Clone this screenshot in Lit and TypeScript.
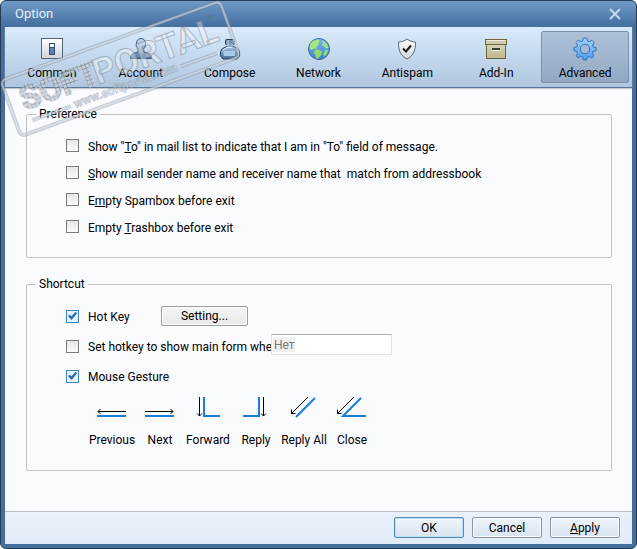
import { LitElement, html, css, svg, nothing } from "lit";
import { customElement, state } from "lit/decorators.js";
import { classMap } from "lit/directives/class-map.js";

const icons = {
  common: svg`
    <rect x="1.5" y="1.5" width="21" height="20" fill="url(#plate)" stroke="#51647c"/>
    <rect x="9.5" y="6.5" width="5" height="11" fill="#5b82b0" stroke="#37506e"/>
    <rect x="10" y="7" width="4" height="4" fill="#f4f9ff"/>
    <rect x="9" y="10" width="6" height="1" fill="#37506e"/>`,
  account: svg`
    <path d="M1.500 21.500C1.500 17.500 4 16 8 15.500L10 12.500C7.500 10.500 7 8 7.500 5.500C8 3 9.700 1.500 12 1.500C14.300 1.500 16 3 16.500 5.500C17 8 16.500 10.500 14 12.500L16 15.500C20 16 22.500 17.500 22.500 21.500Z" fill="url(#blue)" stroke="#3d5878"/>`,
  compose: svg`
    <path d="M2.500 14.500Q3 11.500 8.500 9.500H15.500Q21 11.500 21.500 14.500V19L19 22H5L2.500 19Z" fill="url(#ink)" stroke="#2c3f58"/>
    <rect x="7.500" y="2.500" width="9" height="5" rx="1" fill="#7693b5" stroke="#2c3f58"/>
    <rect x="9" y="7" width="6" height="3" fill="#8ea9c7"/>
    <path d="M10 3V9" stroke="#b9cde4"/>
    <path d="M5 14H17V19H6Z" fill="#a9c9e8"/>
    <path d="M5 13L9 10.500H14" fill="none" stroke="#d9e9f8"/>`,
  network: svg`
    <circle cx="12" cy="12" r="10.500" fill="url(#sea)" stroke="#3f6797"/>
    <path d="M3 8C4 5 7 2.500 11 2.500L13 4L11 7L12 8L9 10L10 12L7 11.500L5 13L2.500 12Z" fill="#a5e67e"/>
    <path d="M15 3.500C18 4.500 21 7.500 21.500 11L19 11.500L17 9L15 8L16 6Z" fill="#a5e67e"/>
    <path d="M8 13L12 12.500L15 15L14 18L11 21.500H9L8.500 18L6.500 15.500Z" fill="#8fdc69"/>
    <path d="M18 13L21 13C20.500 16 19.500 18 17.500 19.500L16.500 17Z" fill="#8fdc69"/>`,
  antispam: svg`
    <path d="M12 2C9.500 4 6.500 5 3.500 5C3.500 13 5 18.500 12 22C19 18.500 20.500 13 20.500 5C17.500 5 14.500 4 12 2Z" fill="url(#plate)" stroke="#5c6a7a"/>
    <path d="M8 11.500L11 14.500L16 8.500" fill="none" stroke="#1b1b1b" stroke-width="2"/>`,
  addin: svg`
    <rect x="2.500" y="7.500" width="19" height="14" fill="url(#box)" stroke="#6e6538"/>
    <rect x="1.500" y="2.500" width="21" height="5" fill="#cdc8ad" stroke="#6e6538"/>
    <rect x="2" y="3" width="20" height="1" fill="#efecdc"/>
    <rect x="8" y="11" width="8" height="2" fill="#33432c"/>
    <rect x="8" y="13" width="8" height="1" fill="#f3f0e2"/>`,
  advanced: svg`
    <path fill-rule="evenodd" d="M10.300 1H13.700L14.400 4L16.300 4.800L18.900 3.200L21.200 5.500L19.500 8L20.200 10L23 10.500V13.700L20.200 14.300L19.400 16.200L21 18.800L18.700 21L16.200 19.400L14.300 20.200L13.700 23H10.300L9.700 20.200L7.800 19.400L5.300 21L3 18.800L4.600 16.200L3.800 14.300L1 13.700V10.500L3.800 9.800L4.600 7.900L3 5.500L5.300 3.200L7.800 4.800L9.700 4ZM12 7.200A4.800 4.800 0 1 0 12 16.800A4.800 4.800 0 1 0 12 7.200Z" fill="url(#gear)" stroke="#2f6fb8"/>`,
};

const gestures = [
  { name: "Previous", art: svg`<path class="ink" d="M1 14.500H29M3.500 12L1 14.500L3.500 17"/><path class="track" d="M0 19H29"/>` },
  { name: "Next", art: svg`<path class="ink" d="M0 14.500H28M25.500 12L28 14.500L25.500 17"/><path class="track" d="M0 19H29"/>` },
  { name: "Forward", art: svg`<path class="ink" d="M6.500 0V19M4 16.500L6.500 19L9 16.500"/><path class="track" d="M11 0V19H27"/>` },
  { name: "Reply", art: svg`<path class="ink" d="M22.500 0V19M20 16.500L22.500 19L25 16.500"/><path class="track" d="M2 19H18V0"/>` },
  { name: "Reply All", art: svg`<path class="ink" d="M19 0L2.500 16.500M2.500 12.500V16.500H6.500"/><path class="track" d="M26 1L7 20"/>` },
  { name: "Close", art: svg`<path class="ink" d="M17 0L0.500 16.500M0.500 12.500V16.500H4.500"/><path class="track" d="M24 1L6 19H29"/>` },
];

const tabs: { id: keyof typeof icons; label: string }[] = [
  { id: "common", label: "Common" },
  { id: "account", label: "Account" },
  { id: "compose", label: "Compose" },
  { id: "network", label: "Network" },
  { id: "antispam", label: "Antispam" },
  { id: "addin", label: "Add-In" },
  { id: "advanced", label: "Advanced" },
];

@customElement("app-root")
export class AppRoot extends LitElement {
  @state() private active = "advanced";

  static styles = css`
    :host {
      display: block;
      position: relative;
      font: 12px/16px Roboto, "Open Sans", sans-serif;
      color: #000;
    }
    * { box-sizing: border-box; }
    button, input { font: inherit; color: inherit; }
    .window {
      display: flex;
      flex-direction: column;
      min-height: 100vh;
      padding: 0 4px 4px;
      border: 1px solid #263c56;
      border-radius: 6px;
      background: linear-gradient(#7099c6, #436e9e 26px);
    }
    .title {
      display: flex;
      align-items: center;
      justify-content: space-between;
      height: 26px;
      padding: 0 10px;
      color: #e6f0fa;
    }
    .title h1 { margin: 0; font: inherit; font-size: 13px; }
    .close { display: flex; padding: 0; border: 0; background: none; }
    .close svg { width: 14px; height: 14px; stroke: #c8d9ea; stroke-width: 2; }
    .tabs {
      display: flex;
      gap: 1px;
      padding: 4px 3px;
      border-bottom: 1px solid #56779a;
      background: linear-gradient(#d9ebfb, #afc6df);
      box-shadow: 0 1px 1px #c5c9d0;
      z-index: 1;
    }
    .tab {
      flex: 1 1 0;
      display: flex;
      flex-direction: column;
      align-items: center;
      height: 52px;
      gap: 4px;
      padding: 5px 0 0;
      border: 1px solid transparent;
      border-radius: 2px;
      background: none;
    }
    .tab.on {
      border-color: #7b91aa;
      background: linear-gradient(#adc2d9, #93a9c3);
    }
    .tab svg { width: 24px; height: 24px; flex: none; }
    .defs { position: absolute; width: 0; height: 0; }
    main {
      flex: 1;
      display: flex;
      flex-direction: column;
      gap: 18px;
      padding: 18px 20px 40px 21px;
      background: #f9fbff;
    }
    fieldset {
      min-width: 0;
      margin: 0;
      padding: 10px 16px 17px 39px;
      border: 1px solid #c3c3c3;
      border-radius: 2px;
    }
    fieldset.shortcut { padding-top: 9px; padding-bottom: 22px; }
    legend { margin-left: -30px; padding: 0 3px; }
    .row { display: flex; align-items: center; height: 27px; white-space: pre; }
    .shortcut .row { height: 30px; }
    .check { display: flex; gap: 9px; align-items: center; }
    .check span { padding-top: 2px; }
    input[type="checkbox"] {
      appearance: none;
      flex: none;
      display: grid;
      place-items: center;
      width: 13px;
      height: 13px;
      margin: 0;
      border: 1px solid #7b7b7b;
      background: linear-gradient(#e6e6e6, #fcfcfc);
    }
    input[type="checkbox"]:checked { border-color: #3f87bf; background: #e3f3fd; }
    input[type="checkbox"]:checked::before {
      content: "";
      width: 9px;
      height: 9px;
      background: #2a66a8;
      clip-path: polygon(0 50%, 20% 36%, 38% 56%, 84% 4%, 100% 20%, 40% 94%);
    }
    .push {
      padding: 0 4px;
      height: 21px;
      border: 1px solid #8b949e;
      border-radius: 2px;
      box-shadow: inset 0 0 0 1px #f7fbff;
      background: linear-gradient(#eff5fb, #d8e4f1);
    }
    .push.setting {
      width: 87px;
      height: 20px;
      border-color: #9c9c9c;
      box-shadow: inset 0 0 0 1px #fcfcfc;
      background: linear-gradient(#f5f5f5, #e9e9e9);
    }
    .push.ok { border-color: #5d88b4; box-shadow: inset 0 0 0 1px #b5e0fb; }
    .hot { width: 95px; }
    .hotkey { width: 205px; }
    .key {
      width: 121px;
      height: 21px;
      padding: 0 2px;
      margin-bottom: 3px;
      border: 1px solid #dfe2e8;
      border-top-color: #a9abb2;
      background: #fff linear-gradient(#efefef, #efefef) 1px 2px / 22px 15px no-repeat;
      color: #7a7a7a;
    }
    .gestures {
      display: grid;
      grid-template-columns: repeat(6, 48px);
      margin: 6px 0 0 22px;
      padding: 0;
      list-style: none;
    }
    .gestures li {
      display: flex;
      flex-direction: column;
      align-items: center;
      gap: 13px;
      white-space: nowrap;
    }
    .gestures svg { width: 31px; height: 22px; fill: none; }
    .ink { stroke: #000; }
    .track { stroke: #1a7cdc; stroke-width: 2; }
    footer {
      display: flex;
      justify-content: flex-end;
      gap: 8px;
      padding: 5px 12px 6px;
      border-top: 1px solid #b9c0cb;
      background: linear-gradient(#e9f1fa, #dfecf8);
    }
    footer .push { width: 70px; }
    .stamp {
      position: absolute;
      top: 0;
      left: 0;
      z-index: 2;
      width: 246px;
      height: 140px;
      pointer-events: none;
      fill: none;
    }
    .stamp text { font-family: Roboto, sans-serif; font-weight: 700; }
    .word { font-size: 35px; fill: #fff; fill-opacity: 0.35; stroke: #73808f; stroke-opacity: 0.5; stroke-width: 1; }
    .dots { font-size: 33px; fill: url(#weave); fill-opacity: 1; stroke: url(#weave); stroke-opacity: 1; stroke-width: 2; }
    .small { font-size: 12px; fill: #fff; fill-opacity: 0.4; stroke: #73808f; stroke-opacity: 0.4; stroke-width: 1; }
    .stamp .mark { font-size: 10px; fill: #5f6f82; fill-opacity: 0.7; stroke: none; }
    .edge { stroke: #7d8894; stroke-opacity: 0.4; stroke-width: 4; }
    .shine { stroke: #e8eff7; stroke-opacity: 0.5; stroke-width: 2; }
  `;

  private check(label: unknown, on = false, extra: unknown = nothing, cls = "") {
    return html`<div class="row"><label class="check ${cls}"><input type="checkbox" .checked=${on}><span>${label}</span></label>${extra}</div>`;
  }

  render() {
    return html`
      <svg class="defs" aria-hidden="true">
        <linearGradient id="plate" x2="0" y2="1"><stop stop-color="#fff"/><stop offset="1" stop-color="#cfd5dc"/></linearGradient>
        <linearGradient id="blue" x2="0" y2="1"><stop stop-color="#c2d6ec"/><stop offset="1" stop-color="#587ba5"/></linearGradient>
        <linearGradient id="ink" x2="0" y2="1"><stop stop-color="#a9c5e3"/><stop offset="1" stop-color="#486b95"/></linearGradient>
        <linearGradient id="sea" x2="0" y2="1"><stop stop-color="#7cb4ee"/><stop offset="1" stop-color="#3f84d6"/></linearGradient>
        <linearGradient id="box" x2="0" y2="1"><stop stop-color="#d8d3ba"/><stop offset="1" stop-color="#bdb58c"/></linearGradient>
        <linearGradient id="gear" x2="0" y2="1"><stop stop-color="#a6d2ff"/><stop offset="1" stop-color="#4b9af0"/></linearGradient>
      </svg>
      <div class="window">
        <header class="title">
          <h1>Option</h1>
          <button class="close" aria-label="Close window"><svg viewBox="0 0 14 14"><path d="M2 2L12 12M12 2L2 12"/></svg></button>
        </header>
        <nav class="tabs">
          ${tabs.map((t) => html`<button class=${classMap({ tab: true, on: t.id === this.active })} @click=${() => (this.active = t.id)}>
            <svg viewBox="0 0 24 24" aria-hidden="true">${icons[t.id]}</svg>${t.label}
          </button>`)}
        </nav>
        <main>
          <fieldset>
            <legend>Preference</legend>
            ${this.check(html`Show "<u>T</u>o" in mail list to indicate that I am in "To" field of message.`)}
            ${this.check(html`<u>S</u>how mail sender name and receiver name that  match from addressbook`)}
            ${this.check(html`E<u>m</u>pty Spambox before exit`)}
            ${this.check(html`Empty <u>T</u>rashbox before exit`)}
          </fieldset>
          <fieldset class="shortcut">
            <legend>Shortcut</legend>
            ${this.check("Hot Key", true, html`<button class="push setting">Setting...</button>`, "hot")}
            ${this.check("Set hotkey to show main form whe", false, html`<input class="key" type="text" aria-label="Main form hotkey" .value=${"Нет"}>`, "hotkey")}
            ${this.check("Mouse Gesture", true)}
            <ul class="gestures">
              ${gestures.map((g) => html`<li><svg viewBox="0 0 31 22" aria-hidden="true">${g.art}</svg>${g.name}</li>`)}
            </ul>
          </fieldset>
        </main>
        <footer>
          <button class="push ok">OK</button>
          <button class="push">Cancel</button>
          <button class="push"><u>A</u>pply</button>
        </footer>
      </div>
      <svg class="stamp" viewBox="0 0 246 140">
        <pattern id="weave" width="4" height="4" patternUnits="userSpaceOnUse">
          <rect width="4" height="4" fill="#66727f" fill-opacity="0.4"/>
          <rect width="3" height="3" fill="#f2f6fb" fill-opacity="0.5"/>
        </pattern>
        <g transform="translate(121 69) rotate(-20)">
          <rect class="edge" x="-117" y="-30" width="233" height="59" rx="5"/>
          <rect class="shine" x="-117" y="-30" width="233" height="59" rx="5"/>
          <text class="word dots" x="-105" y="6">SOFT</text>
          <text class="word" x="-27" y="7">PORTAL</text>
          <text class="small mark" x="99" y="-13">™</text>
          <path class="edge" d="M-101 18H-60M57 18H96"/>
          <path class="shine" d="M-101 18H-60M57 18H96"/>
          <text class="small" x="-56" y="21">www.softportal.com</text>
        </g>
      </svg>
    `;
  }
}
